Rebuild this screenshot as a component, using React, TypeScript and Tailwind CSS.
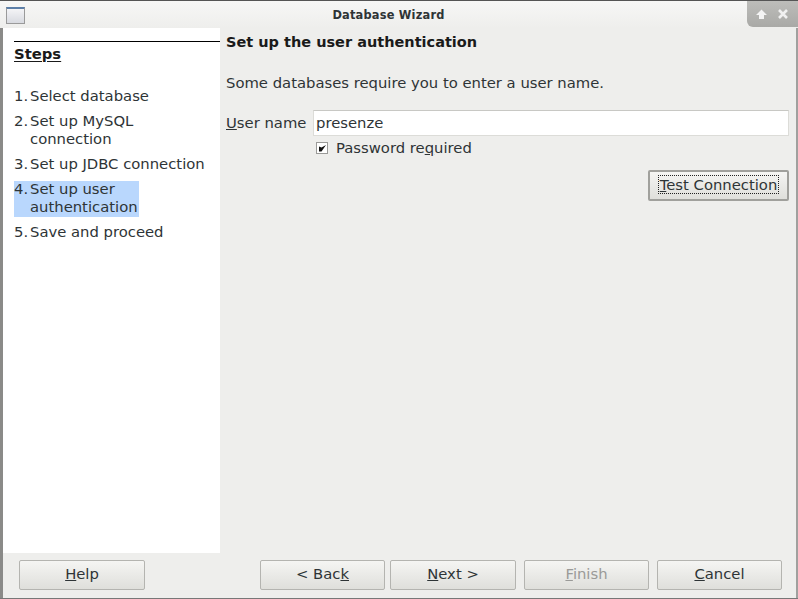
import React from "react";

const font = { fontFamily: '"DejaVu Sans", sans-serif' };

function Btn({ children, w, disabled }: { children: React.ReactNode; w: string; disabled?: boolean }) {
  return (
    <div
      className={`${w} h-[30px] pb-[2px] flex items-center justify-center rounded-[2px] border border-[#b4b4b0] bg-gradient-to-b from-[#f5f5f3] to-[#dfdfdb] text-[14.8px] leading-[18px] ${disabled ? "text-[#9a9a98]" : "text-[#2e3436]"}`}
    >
      <span>{children}</span>
    </div>
  );
}

function Step({ n, children, active }: { n: string; children: React.ReactNode; active?: boolean }) {
  return (
    <div className={`flex w-[fit-content] text-[14.8px] leading-[18px] text-[#2e3436] ${active ? "bg-[#b9d7fd] min-w-[125px] mt-[1px] mb-[-1px] h-[36px]" : ""}`}>
      <span className={`w-4 shrink-0 ${active ? "-mt-px" : ""}`}>{n}</span>
      <span className={`whitespace-pre-line ${active ? "-mt-px" : ""}`}>{children}</span>
    </div>
  );
}

export default function App() {
  return (
    <div style={font} className="relative w-[798px] h-[599px] overflow-hidden flex flex-col bg-[#eeeeec] text-[#2e3436] border-b border-[#777]">
      <div className="h-[28px] shrink-0 relative flex items-center justify-center border-t border-[#555] bg-gradient-to-b from-[#f7f7f6] to-[#eeeeec]">
        <div className="absolute left-[6px] top-[6px] w-[19px] h-[17px] border border-[#9a9a9a] bg-gradient-to-b from-[#f4f4f6] to-[#d8dae0] border-t-2 border-t-[#5c7fa8]" />
        <span className="font-bold text-[11.4px] text-[#2e3436] mt-[2px] mr-[21px] tracking-[0.2px]">Database Wizard</span>
        <div className="absolute right-0 top-0 w-[51px] h-[26px] bg-gradient-to-b from-[#bdbdba] to-[#a9a9a6] rounded-bl-[6px] flex items-center justify-center gap-[9px] pr-[2px] text-white">
          <svg width="13" height="13" viewBox="0 0 13 13"><path d="M6.5 1.5 L12 7 H9 V11 H4 V7 H1 Z" fill="#f4f4f4" /></svg>
          <svg width="12" height="12" viewBox="0 0 12 12"><path d="M2 2 L10 10 M10 2 L2 10" stroke="#f0f0f0" strokeWidth="2.6" /></svg>
        </div>
      </div>
      <div className="flex-1 flex min-h-0 border-l-[3px] border-[#8a8a88] border-r-2 border-r-[#a0a09e]">
        <div className="flex flex-col min-w-0 flex-1">
          <div className="flex-1 flex min-h-0">
            <div className="w-[217px] shrink-0 bg-white pl-[11px] pt-[13px]">
              <div className="border-t border-black pt-[3px] font-bold text-[14.8px] leading-[18px] text-[#1a1a1a] underline underline-offset-2">Steps</div>
              <div className="mt-[24px] flex flex-col gap-[7px]">
                <Step n="1.">Select database</Step>
                <Step n="2.">{"Set up MySQL\nconnection"}</Step>
                <Step n="3.">Set up JDBC connection</Step>
                <Step n="4." active>{"Set up user\nauthentication"}</Step>
                <Step n="5.">Save and proceed</Step>
              </div>
            </div>
            <div className="flex-1 min-w-0 pl-[6px] pt-[5px] pr-[7px]">
              <div className="font-bold text-[14.5px] leading-[18px] text-[#1a1a1a]">Set up the user authentication</div>
              <div className="mt-[23px] text-[14.8px] leading-[18px]">Some databases require you to enter a user name.</div>
              <div className="mt-[18px] flex items-center">
                <span className="w-[87px] shrink-0 text-[14.8px] leading-[18px]"><u>U</u>ser name</span>
                <div className="flex-1 h-[26px] bg-white border border-[#dcdcd8] border-t-[#c8c8c4] pl-[2px] flex items-center text-[14.8px]">presenze</div>
              </div>
              <div className="mt-[3px] ml-[90px] flex items-center gap-[8px] text-[14.8px] leading-[18px]">
                <div className="w-[12px] h-[12px] border border-[#9a9a98] bg-white flex items-center justify-center">
                  <svg width="9" height="9" viewBox="0 0 9 9"><path d="M1 2.5 L1 7.5 L3.5 7.5 L8 1 L3.5 3.5 Z" fill="#111" /></svg>
                </div>
                <span>Password re<u>q</u>uired</span>
              </div>
              <div className="mt-[13px] flex justify-end">
                <div className="w-[141px] h-[31px] pb-[2px] flex items-center justify-center rounded-[2px] border-2 border-[#a0a09c] bg-gradient-to-b from-[#f5f5f3] to-[#dfdfdb] text-[14.8px]">
                  <span className="border border-dotted border-[#222] leading-[17px] px-px"><u>T</u>est Connection</span>
                </div>
              </div>
            </div>
          </div>
          <div className="h-[45px] shrink-0 flex items-start pt-[7px] pl-[16px]">
            <Btn w="w-[126px]"><u>H</u>elp</Btn>
            <div className="ml-[115px] flex gap-[5px]">
              <Btn w="w-[125px]">&lt; Bac<u>k</u></Btn>
              <Btn w="w-[126px]"><u>N</u>ext &gt;</Btn>
            </div>
            <div className="ml-[8px] flex gap-[8px]">
              <Btn w="w-[125px]" disabled><u>F</u>inish</Btn>
              <Btn w="w-[125px]"><u>C</u>ancel</Btn>
            </div>
          </div>
        </div>
      </div>
    </div>
  );
}
